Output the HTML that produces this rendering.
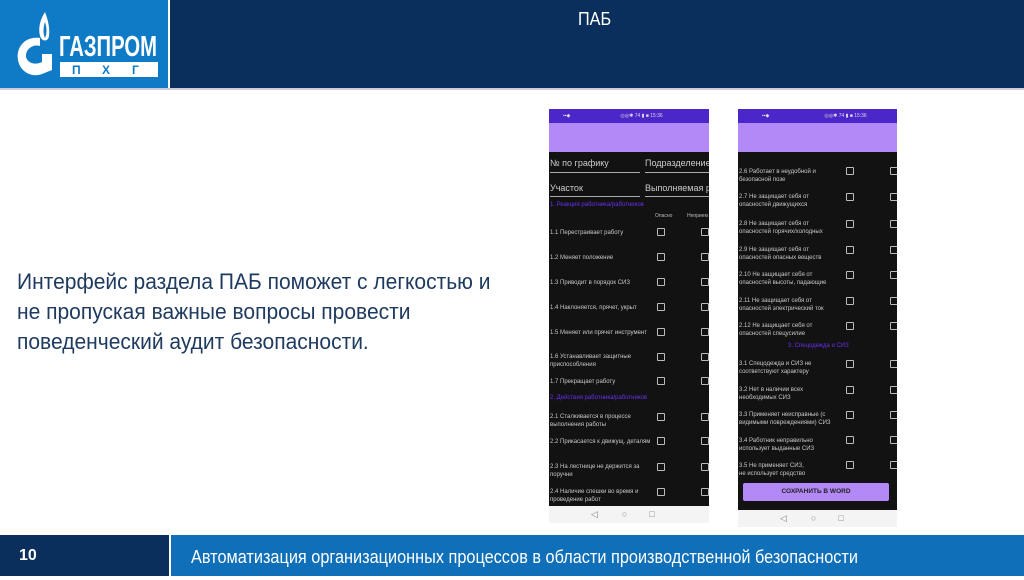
<!DOCTYPE html>
<html><head><meta charset="utf-8"><style>
*{margin:0;padding:0;box-sizing:border-box}
body{width:1024px;height:576px;position:relative;background:#fff;font-family:"Liberation Sans",sans-serif;overflow:hidden}
.abs{position:absolute}
.ph{position:absolute;background:#121212;overflow:hidden;font-size:6px;color:#ccc}
.sb{position:absolute;left:0;right:0;top:0;height:14px;background:#4b26c9;color:#ddd;font-size:5px;line-height:14px}
.tb{position:absolute;left:0;right:0;top:14px;height:29px;background:#b388f7}
.nav{position:absolute;left:0;right:0;bottom:0;height:17px;background:#f4f4f4;color:#888;font-size:9px;line-height:17px}
.row{position:absolute;left:1px;width:110px;line-height:8px;font-size:6px;color:#c8c8c8;white-space:nowrap}
.cb{position:absolute;width:8px;height:8px;border:1px solid #bbb;border-radius:1px}
.sec{position:absolute;left:1px;font-size:6px;color:#6a2ff0}
.ln{display:block;white-space:nowrap;transform:scaleX(0.955);transform-origin:left}
</style></head><body>
<div class="abs" style="left:0;top:0;width:168px;height:88px;background:#0f7bc6"></div>
<div class="abs" style="left:170px;top:0;width:854px;height:88px;background:#0b2f5c"></div>
<div class="abs" style="left:0;top:88px;width:1024px;height:2px;background:#ccd"></div>
<svg class="abs" style="left:14px;top:10px" width="150" height="72" viewBox="0 0 150 72">
<path d="M31 2 C26 10 24 18 26 26 C28 32 34 32 35 26 C36 18 34 10 31 2Z" fill="#fff"/>
<path d="M31 12 C29 18 29 24 31 28 C33 24 33 18 31 12Z" fill="#0f7bc6"/>
<path d="M26 28 C10 26 2 38 4 50 C6 62 18 68 28 64 L38 60 L38 44 L28 44 L28 52 C20 56 12 52 12 46 C12 38 20 34 26 36Z" fill="#fff"/>
<text x="45" y="46" fill="#fff" font-family="Liberation Sans" font-weight="bold" font-size="29" textLength="98" lengthAdjust="spacingAndGlyphs">ГАЗПРОМ</text>
<rect x="46" y="52" width="98" height="15" fill="#fff"/>
<text x="58" y="64" fill="#0f7bc6" font-family="Liberation Sans" font-weight="bold" font-size="12">П</text>
<text x="88" y="64" fill="#0f7bc6" font-family="Liberation Sans" font-weight="bold" font-size="12">Х</text>
<text x="118" y="64" fill="#0f7bc6" font-family="Liberation Sans" font-weight="bold" font-size="12">Г</text>
</svg>
<div class="abs" style="left:578px;top:9px;font-size:18px;color:#fff"><span class="ln" style="transform:scaleX(0.9)">ПАБ</span></div>
<div class="abs" style="left:17px;top:267px;font-size:22px;line-height:30px;color:#1e3a5f">
<span class="ln">Интерфейс раздела ПАБ поможет с легкостью и</span>
<span class="ln">не пропуская важные вопросы провести</span>
<span class="ln">поведенческий аудит безопасности.</span></div>

<div class="ph" style="left:549px;top:109px;width:160px;height:414px">
<div class="sb"><span style="margin-left:14px">▪▪◆</span><span style="margin-left:50px">◎◎✱ 74 ▮ ■ 15:36</span></div>
<div class="tb"></div>
<div class="abs" style="left:1px;top:49px;font-size:9px;color:#ccc">№ по графику</div>
<div class="abs" style="left:96px;top:49px;font-size:9px;color:#ccc;white-space:nowrap">Подразделение</div>
<div class="abs" style="left:1px;top:63px;width:90px;height:1px;background:#aaa"></div>
<div class="abs" style="left:96px;top:63px;width:64px;height:1px;background:#aaa"></div>
<div class="abs" style="left:1px;top:74px;font-size:9px;color:#ccc">Участок</div>
<div class="abs" style="left:96px;top:74px;font-size:9px;color:#ccc;white-space:nowrap">Выполняемая ра</div>
<div class="abs" style="left:1px;top:87px;width:90px;height:1px;background:#aaa"></div>
<div class="abs" style="left:96px;top:87px;width:64px;height:1px;background:#aaa"></div>
<div class="sec" style="top:93px">1. Реакция работника/работников</div>
<div class="abs" style="left:106px;top:104px;font-size:5px;color:#bbb">Опасно</div>
<div class="abs" style="left:138px;top:104px;font-size:5px;color:#bbb">Неприем</div>
<div class="row" style="top:120px">1.1 Перестраивает работу</div><div class="cb" style="left:108px;top:119px"></div><div class="cb" style="left:152px;top:119px"></div>
<div class="row" style="top:145px">1.2 Меняет положение</div><div class="cb" style="left:108px;top:144px"></div><div class="cb" style="left:152px;top:144px"></div>
<div class="row" style="top:170px">1.3 Приводит в порядок СИЗ</div><div class="cb" style="left:108px;top:169px"></div><div class="cb" style="left:152px;top:169px"></div>
<div class="row" style="top:195px">1.4 Наклоняется, прячет, укрыт</div><div class="cb" style="left:108px;top:194px"></div><div class="cb" style="left:152px;top:194px"></div>
<div class="row" style="top:220px">1.5 Меняет или прячет инструмент</div><div class="cb" style="left:108px;top:219px"></div><div class="cb" style="left:152px;top:219px"></div>
<div class="row" style="top:244px">1.6 Устанавливает защитные<br>приспособления</div><div class="cb" style="left:108px;top:244px"></div><div class="cb" style="left:152px;top:244px"></div>
<div class="row" style="top:269px">1.7 Прекращает работу</div><div class="cb" style="left:108px;top:268px"></div><div class="cb" style="left:152px;top:268px"></div>
<div class="sec" style="top:286px">2. Действия работника/работников</div>
<div class="row" style="top:304px">2.1 Сталкивается в процессе<br>выполнения работы</div><div class="cb" style="left:108px;top:304px"></div><div class="cb" style="left:152px;top:304px"></div>
<div class="row" style="top:329px">2.2 Прикасается к движущ. деталям</div><div class="cb" style="left:108px;top:328px"></div><div class="cb" style="left:152px;top:328px"></div>
<div class="row" style="top:354px">2.3 На лестнице не держится за<br>поручни</div><div class="cb" style="left:108px;top:354px"></div><div class="cb" style="left:152px;top:354px"></div>
<div class="row" style="top:379px">2.4 Наличие спешки во время и<br>проведение работ</div><div class="cb" style="left:108px;top:379px"></div><div class="cb" style="left:152px;top:379px"></div>
<div class="nav"><span style="margin-left:42px">◁</span><span style="margin-left:24px">○</span><span style="margin-left:22px">□</span></div>
</div>

<div class="ph" style="left:738px;top:109px;width:159px;height:418px">
<div class="sb"><span style="margin-left:24px">▪▪◆</span><span style="margin-left:55px">◎◎✱ 74 ▮ ■ 15:36</span></div>
<div class="tb"></div>
<div class="row" style="top:59px">2.6 Работает в неудобной и<br>безопасной позе</div><div class="cb" style="left:108px;top:58px"></div><div class="cb" style="left:152px;top:58px"></div>
<div class="row" style="top:84px">2.7 Не защищает себя от<br>опасностей движущихся</div><div class="cb" style="left:108px;top:84px"></div><div class="cb" style="left:152px;top:84px"></div>
<div class="row" style="top:111px">2.8 Не защищает себя от<br>опасностей горячих/холодных</div><div class="cb" style="left:108px;top:111px"></div><div class="cb" style="left:152px;top:111px"></div>
<div class="row" style="top:137px">2.9 Не защищает себя от<br>опасностей опасных веществ</div><div class="cb" style="left:108px;top:137px"></div><div class="cb" style="left:152px;top:137px"></div>
<div class="row" style="top:162px">2.10 Не защищает себя от<br>опасностей высоты, падающие</div><div class="cb" style="left:108px;top:162px"></div><div class="cb" style="left:152px;top:162px"></div>
<div class="row" style="top:188px">2.11 Не защищает себя от<br>опасностей электрический ток</div><div class="cb" style="left:108px;top:188px"></div><div class="cb" style="left:152px;top:188px"></div>
<div class="row" style="top:213px">2.12 Не защищает себя от<br>опасностей спецусилие</div><div class="cb" style="left:108px;top:213px"></div><div class="cb" style="left:152px;top:213px"></div>
<div class="sec" style="top:234px;left:50px">3. Спецодежда и СИЗ</div>
<div class="row" style="top:251px">3.1 Спецодежда и СИЗ не<br>соответствуют характеру</div><div class="cb" style="left:108px;top:251px"></div><div class="cb" style="left:152px;top:251px"></div>
<div class="row" style="top:277px">3.2 Нет в наличии всех<br>необходимых СИЗ</div><div class="cb" style="left:108px;top:277px"></div><div class="cb" style="left:152px;top:277px"></div>
<div class="row" style="top:302px">3.3 Применяет неисправные (с<br>видимыми повреждениями) СИЗ</div><div class="cb" style="left:108px;top:302px"></div><div class="cb" style="left:152px;top:302px"></div>
<div class="row" style="top:328px">3.4 Работник неправильно<br>использует выданные СИЗ</div><div class="cb" style="left:108px;top:327px"></div><div class="cb" style="left:152px;top:327px"></div>
<div class="row" style="top:353px">3.5 Не применяет СИЗ,<br>не использует средство</div><div class="cb" style="left:108px;top:352px"></div><div class="cb" style="left:152px;top:352px"></div>
<div class="abs" style="left:5px;top:374px;width:146px;height:18px;background:#b388f7;border-radius:2px;color:#222;font-size:6.5px;text-align:center;line-height:18px;font-weight:bold">СОХРАНИТЬ В WORD</div>
<div class="nav"><span style="margin-left:42px">◁</span><span style="margin-left:24px">○</span><span style="margin-left:22px">□</span></div>
</div>

<div class="abs" style="left:0;top:535px;width:169px;height:41px;background:#0b2f5c;color:#fff;font-size:16px;font-weight:bold;line-height:41px;padding-left:19px">10</div>
<div class="abs" style="left:171px;top:535px;width:853px;height:41px;background:#0f6fb8;color:#fff;font-size:18px;line-height:45px;padding-left:20px"><span class="ln" style="transform:scaleX(0.905)">Автоматизация организационных процессов в области производственной безопасности</span></div>
</body></html>
